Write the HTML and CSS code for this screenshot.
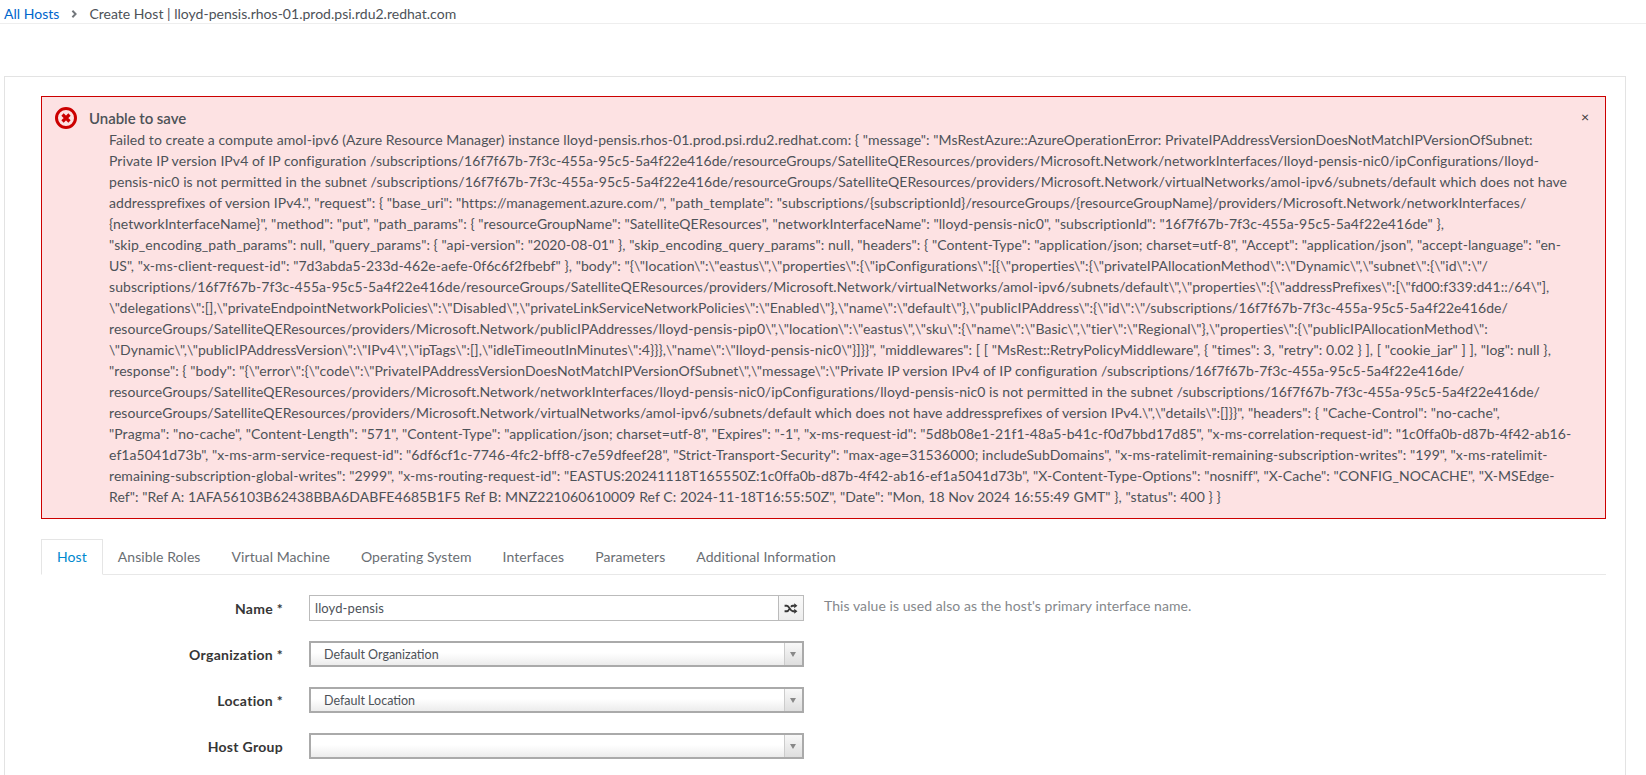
FILE: index.html
```html
<!DOCTYPE html>
<html lang="en">
<head>
<meta charset="utf-8">
<title>Create Host</title>
<link rel="stylesheet" href="styles.css">
</head>
<body>
<nav class="crumbs">
  <a class="crumb-link" href="#">All Hosts</a>
  <svg class="crumb-sep" width="6" height="8" viewBox="0 0 7 10"><path d="M1.5 1 L5.500 5 L1.500 9" fill="none" stroke="#72767b" stroke-width="2.400"/></svg>
  <span class="crumb-current">Create Host | lloyd-pensis.rhos-01.prod.psi.rdu2.redhat.com</span>
</nav>
<main class="card">
  <section class="alert">
    <svg class="alert-icon" width="22" height="22" viewBox="0 0 22 22"><circle cx="11" cy="11" r="9.500" fill="none" stroke="#c00" stroke-width="3"/><path d="M7.500 7.500 L14.500 14.500 M14.500 7.500 L7.500 14.500" stroke="#c00" stroke-width="3.200"/></svg>
    <div class="alert-body">
      <div class="alert-title">Unable to save</div>
      <div class="alert-msg">
        <div class="ln">Failed to create a compute amol-ipv6 (Azure Resource Manager) instance lloyd-pensis.rhos-01.prod.psi.rdu2.redhat.com: { "message": "MsRestAzure::AzureOperationError: PrivateIPAddressVersionDoesNotMatchIPVersionOfSubnet:</div>
        <div class="ln">Private IP version IPv4 of IP configuration /subscriptions/16f7f67b-7f3c-455a-95c5-5a4f22e416de/resourceGroups/SatelliteQEResources/providers/Microsoft.Network/networkInterfaces/lloyd-pensis-nic0/ipConfigurations/lloyd-</div>
        <div class="ln">pensis-nic0 is not permitted in the subnet /subscriptions/16f7f67b-7f3c-455a-95c5-5a4f22e416de/resourceGroups/SatelliteQEResources/providers/Microsoft.Network/virtualNetworks/amol-ipv6/subnets/default which does not have</div>
        <div class="ln">addressprefixes of version IPv4.", "request": { "base_uri": "https://management.azure.com/", "path_template": "subscriptions/{subscriptionId}/resourceGroups/{resourceGroupName}/providers/Microsoft.Network/networkInterfaces/</div>
        <div class="ln">{networkInterfaceName}", "method": "put", "path_params": { "resourceGroupName": "SatelliteQEResources", "networkInterfaceName": "lloyd-pensis-nic0", "subscriptionId": "16f7f67b-7f3c-455a-95c5-5a4f22e416de" },</div>
        <div class="ln">"skip_encoding_path_params": null, "query_params": { "api-version": "2020-08-01" }, "skip_encoding_query_params": null, "headers": { "Content-Type": "application/json; charset=utf-8", "Accept": "application/json", "accept-language": "en-</div>
        <div class="ln">US", "x-ms-client-request-id": "7d3abda5-233d-462e-aefe-0f6c6f2fbebf" }, "body": "{\"location\":\"eastus\",\"properties\":{\"ipConfigurations\":[{\"properties\":{\"privateIPAllocationMethod\":\"Dynamic\",\"subnet\":{\"id\":\"/</div>
        <div class="ln">subscriptions/16f7f67b-7f3c-455a-95c5-5a4f22e416de/resourceGroups/SatelliteQEResources/providers/Microsoft.Network/virtualNetworks/amol-ipv6/subnets/default\",\"properties\":{\"addressPrefixes\":[\"fd00:f339:d41::/64\"],</div>
        <div class="ln">\"delegations\":[],\"privateEndpointNetworkPolicies\":\"Disabled\",\"privateLinkServiceNetworkPolicies\":\"Enabled\"},\"name\":\"default\"},\"publicIPAddress\":{\"id\":\"/subscriptions/16f7f67b-7f3c-455a-95c5-5a4f22e416de/</div>
        <div class="ln">resourceGroups/SatelliteQEResources/providers/Microsoft.Network/publicIPAddresses/lloyd-pensis-pip0\",\"location\":\"eastus\",\"sku\":{\"name\":\"Basic\",\"tier\":\"Regional\"},\"properties\":{\"publicIPAllocationMethod\":</div>
        <div class="ln">\"Dynamic\",\"publicIPAddressVersion\":\"IPv4\",\"ipTags\":[],\"idleTimeoutInMinutes\":4}}},\"name\":\"lloyd-pensis-nic0\"}]}}", "middlewares": [ [ "MsRest::RetryPolicyMiddleware", { "times": 3, "retry": 0.02 } ], [ "cookie_jar" ] ], "log": null },</div>
        <div class="ln">"response": { "body": "{\"error\":{\"code\":\"PrivateIPAddressVersionDoesNotMatchIPVersionOfSubnet\",\"message\":\"Private IP version IPv4 of IP configuration /subscriptions/16f7f67b-7f3c-455a-95c5-5a4f22e416de/</div>
        <div class="ln">resourceGroups/SatelliteQEResources/providers/Microsoft.Network/networkInterfaces/lloyd-pensis-nic0/ipConfigurations/lloyd-pensis-nic0 is not permitted in the subnet /subscriptions/16f7f67b-7f3c-455a-95c5-5a4f22e416de/</div>
        <div class="ln">resourceGroups/SatelliteQEResources/providers/Microsoft.Network/virtualNetworks/amol-ipv6/subnets/default which does not have addressprefixes of version IPv4.\",\"details\":[]}}", "headers": { "Cache-Control": "no-cache",</div>
        <div class="ln">"Pragma": "no-cache", "Content-Length": "571", "Content-Type": "application/json; charset=utf-8", "Expires": "-1", "x-ms-request-id": "5d8b08e1-21f1-48a5-b41c-f0d7bbd17d85", "x-ms-correlation-request-id": "1c0ffa0b-d87b-4f42-ab16-</div>
        <div class="ln">ef1a5041d73b", "x-ms-arm-service-request-id": "6df6cf1c-7746-4fc2-bff8-c7e59dfeef28", "Strict-Transport-Security": "max-age=31536000; includeSubDomains", "x-ms-ratelimit-remaining-subscription-writes": "199", "x-ms-ratelimit-</div>
        <div class="ln">remaining-subscription-global-writes": "2999", "x-ms-routing-request-id": "EASTUS:20241118T165550Z:1c0ffa0b-d87b-4f42-ab16-ef1a5041d73b", "X-Content-Type-Options": "nosniff", "X-Cache": "CONFIG_NOCACHE", "X-MSEdge-</div>
        <div class="ln">Ref": "Ref A: 1AFA56103B62438BBA6DABFE4685B1F5 Ref B: MNZ221060610009 Ref C: 2024-11-18T16:55:50Z", "Date": "Mon, 18 Nov 2024 16:55:49 GMT" }, "status": 400 } }</div>
      </div>
    </div>
    <button class="alert-close" type="button">×</button>
  </section>

  <ul class="tabs">
    <li class="tab active">Host</li>
    <li class="tab">Ansible Roles</li>
    <li class="tab">Virtual Machine</li>
    <li class="tab">Operating System</li>
    <li class="tab">Interfaces</li>
    <li class="tab">Parameters</li>
    <li class="tab">Additional Information</li>
  </ul>

  <form class="form">
    <div class="row">
      <label class="label">Name *</label>
      <div class="input-group">
        <input class="input" type="text" value="lloyd-pensis">
        <span class="addon"><svg width="14" height="11" viewBox="0 0 14 12"><path d="M0 3h2.500c2.500 0 3.500 6 6.500 6h2M0 9h2.500c1.200 0 2-1.200 2.600-2.400M7 4.200C7.600 3.400 8.100 3 9 3h2" fill="none" stroke="#363636" stroke-width="2"/><path d="M10.500 0.300 14 3l-3.500 2.700zM10.500 6.300 14 9l-3.500 2.700z" fill="#363636"/></svg></span>
      </div>
      <span class="help">This value is used also as the host's primary interface name.</span>
    </div>
    <div class="row">
      <label class="label">Organization *</label>
      <div class="select"><span class="select-value">Default Organization</span><span class="select-arrow"></span></div>
    </div>
    <div class="row">
      <label class="label">Location *</label>
      <div class="select"><span class="select-value">Default Location</span><span class="select-arrow"></span></div>
    </div>
    <div class="row">
      <label class="label">Host Group</label>
      <div class="select"><span class="select-value"></span><span class="select-arrow"></span></div>
    </div>
  </form>
</main>
</body>
</html>
```

FILE: styles.css
```css
* { box-sizing: border-box; }
html, body { height: 775px; overflow: hidden; }
body {
  margin: 0;
  background: #fff;
  color: #4d5258;
  font-family: "Lato", "Liberation Sans", sans-serif;
  font-size: 14px;
  line-height: 21px;
}
.crumbs {
  height: 24px;
  padding: 3px 0 0 4px;
  border-bottom: 1px solid #eeeeee;
  display: flex;
  align-items: flex-start;
  letter-spacing: 0.02px;
}
.crumb-link { color: #0066cc; text-decoration: none; }
.crumb-sep { margin: 7px 12px 0 12px; }
.crumb-current { color: #4d5258; }
.card {
  margin: 52px 20px 0 4px;
  padding: 19px 19px 40px 36px;
  border: 1px solid #e3e3e3;
  height: 800px;
}
.alert {
  display: flex;
  align-items: flex-start;
  position: relative;
  padding: 11px 14px 11px 13px;
  background: #fde2e3;
  border: 1px solid #cc0000;
}
.alert-icon { flex: none; margin: -1px 12px 0 0; }
.alert-body { flex: 1; min-width: 0; }
.alert-title { font-size: 15px; letter-spacing: -0.05px; font-weight: 600; color: #4d5258; }
.alert-msg { padding-left: 20px; color: #4d5258; letter-spacing: 0.07px; }
.ln { white-space: nowrap; }
.alert-close {
  position: absolute;
  top: 9px;
  right: 16px;
  padding: 0;
  border: 0;
  background: none;
  color: #363636;
  font: 14px/21px "Lato", sans-serif;
}
.tabs {
  display: flex;
  list-style: none;
  margin: 20px 0 0 0;
  padding: 0;
  height: 36px;
  border-bottom: 1px solid #e8e8e8;
  letter-spacing: 0.07px;
}
.tab {
  padding: 6px 15px;
  margin-right: -1px;
  height: 36px;
  border: 1px solid transparent;
  color: #6a6e73;
}
.tab.active {
  color: #0088ce;
  background: #fff;
  border-color: #e5e5e5;
  border-bottom-color: #fff;
}
.form { margin-top: 20px; }
.row {
  display: flex;
  align-items: center;
  height: 26px;
  margin-bottom: 20px;
}
.label {
  width: 242px;
  margin-right: 26px;
  text-align: right;
  font-weight: 700;
  letter-spacing: 0.3px;
  color: #363636;
}
.input-group {
  display: flex;
  width: 495px;
  height: 26px;
  border: 1px solid #bbb;
}
.input {
  flex: 1;
  min-width: 0;
  border: 0;
  outline: 0;
  padding: 0 5px;
  font: 13px "Lato", sans-serif;
  letter-spacing: 0.1px;
  color: #4d5258;
}
.addon {
  flex: none;
  width: 25px;
  display: flex;
  align-items: center;
  justify-content: center;
  border-left: 1px solid #bbb;
  background: linear-gradient(#fafafa, #ededed);
}
.help { margin-left: 20px; margin-top: -6px; color: #85888c; letter-spacing: 0.07px; }
.select {
  display: flex;
  width: 495px;
  height: 26px;
  border: 2px solid #aaa;
  background: linear-gradient(#fff 45%, #ececec);
  font-size: 12.500px;
  color: #4d5258;
}
.select-value { flex: 1; padding-left: 13px; line-height: 23px; }
.select-arrow {
  flex: none;
  width: 18px;
  position: relative;
  border-left: 1px solid #ccc;
  background: linear-gradient(#f8f8f8, #dedede);
}
.select-arrow::after {
  content: "";
  position: absolute;
  left: 5px;
  top: 9px;
  border: 3.500px solid transparent;
  border-top: 5px solid #888;
  border-bottom: 0;
}
```
